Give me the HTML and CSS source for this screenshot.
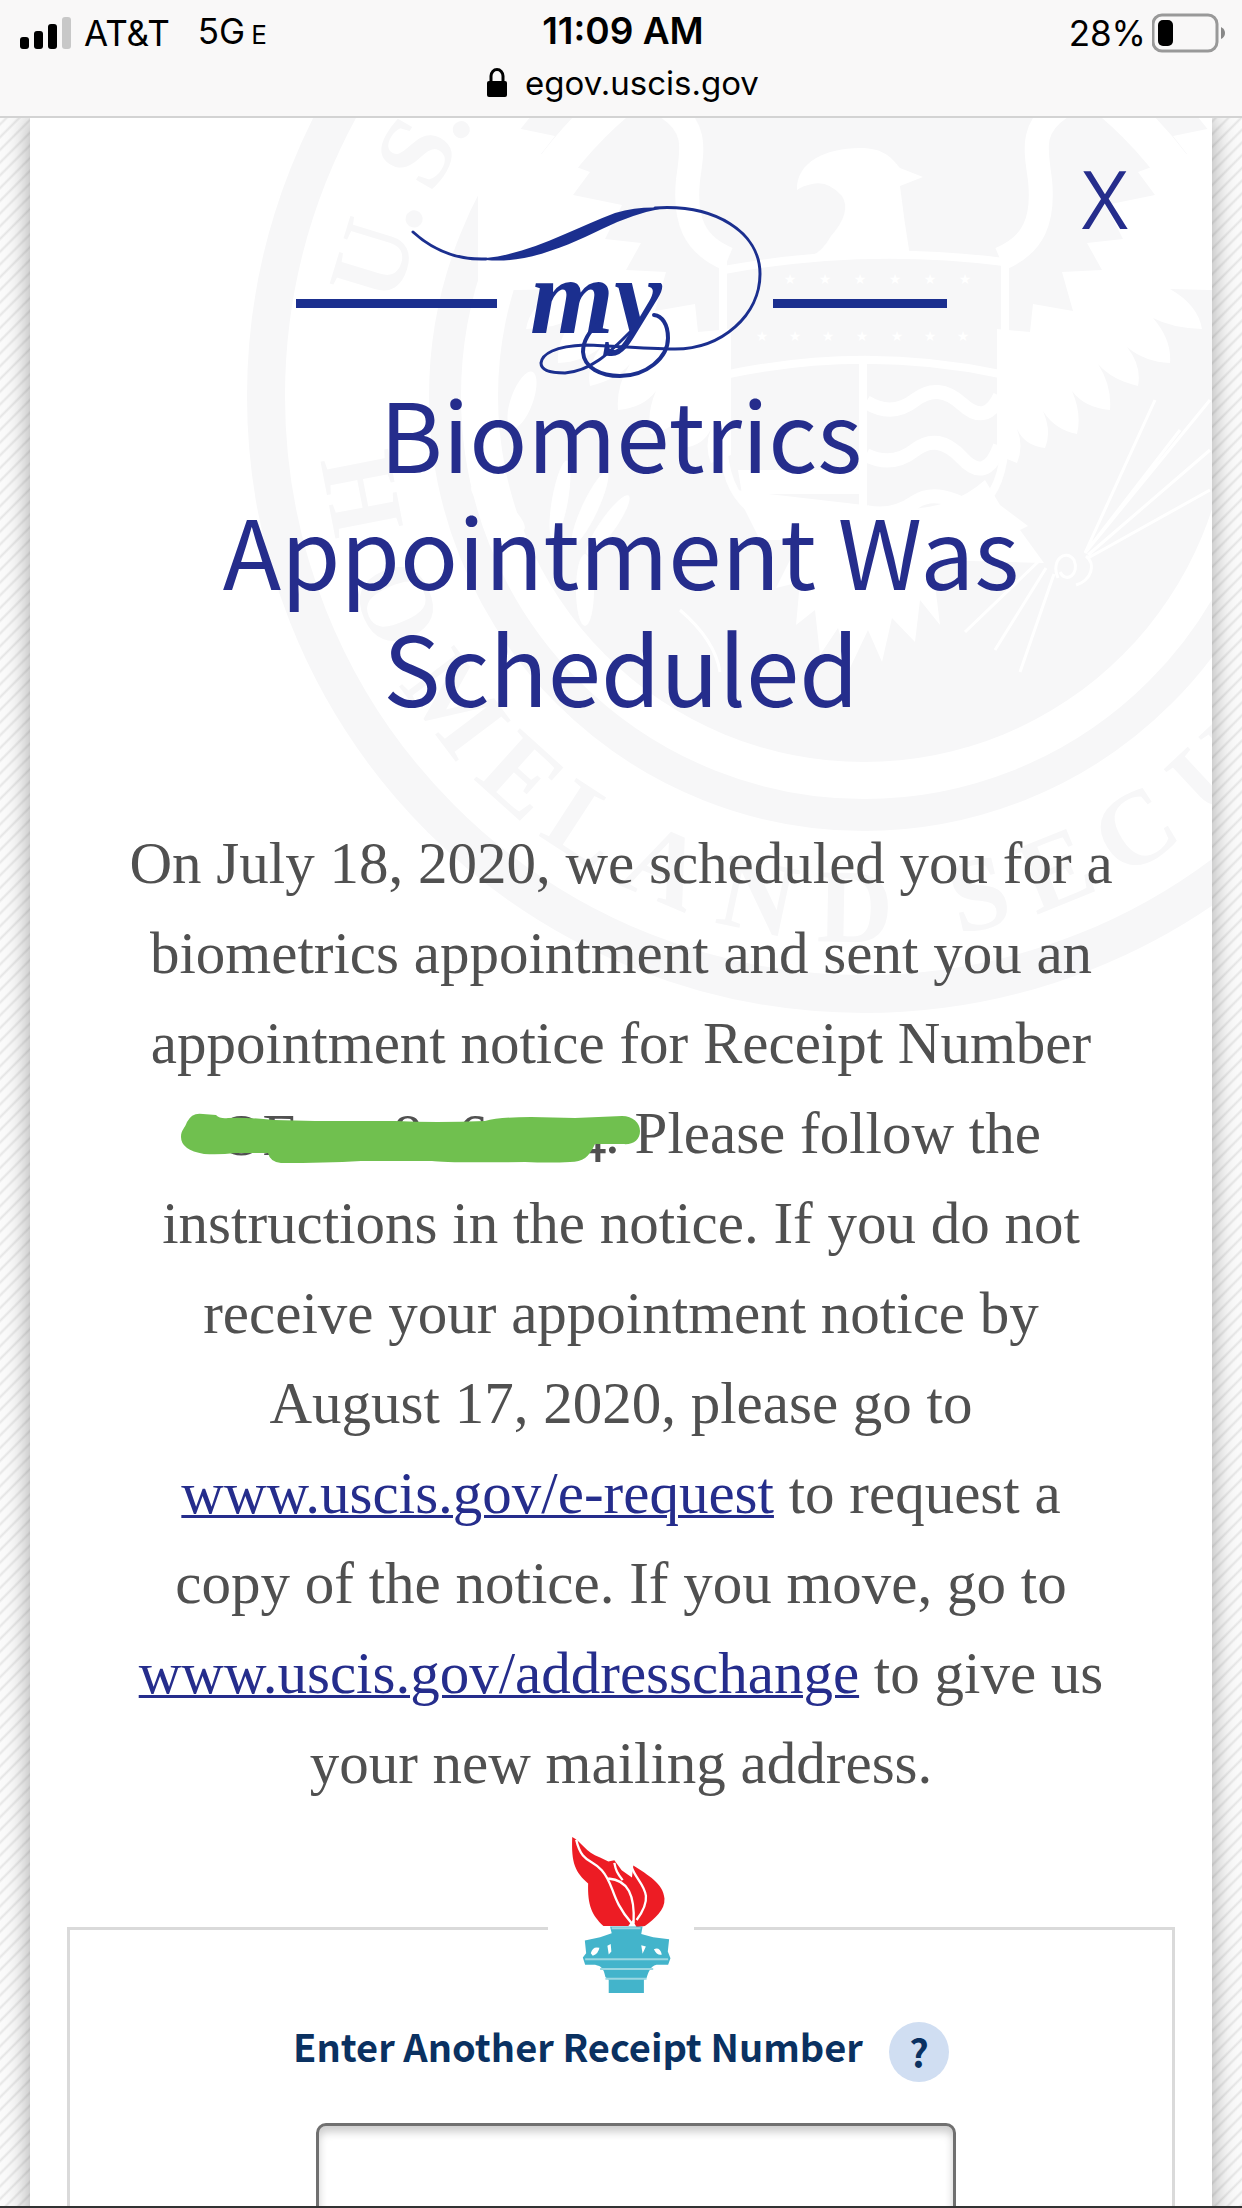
FILE: index.html
```html
<!DOCTYPE html>
<html lang="en">
<head>
  <meta charset="UTF-8">
  <meta name="viewport" content="width=device-width, initial-scale=1.0">
  <title>Case Status</title>
  <link rel="stylesheet" href="styles.css">
</head>
<body>

  <!-- Status bar and address -->
  <header class="browser-bar">
    <div class="status-row">
      <div class="carrier">
        <svg class="signal" viewBox="0 0 52 40" aria-hidden="true">
          <rect x="0" y="24" width="9" height="12" rx="3"/>
          <rect x="14" y="18" width="9" height="18" rx="3"/>
          <rect x="28" y="11" width="9" height="25" rx="3"/>
          <rect x="42" y="4" width="9" height="32" rx="3" fill="#c8c8c8"/>
        </svg>
        <span>AT&amp;T</span>
        <span class="network">5G<small>E</small></span>
      </div>
      <div class="time">11:09 AM</div>
      <div class="battery">
        <span>28%</span>
        <svg class="battery-icon" viewBox="0 0 74 40" aria-hidden="true">
          <rect x="1" y="2" width="64" height="36" rx="9" fill="none" stroke="#999" stroke-width="3"/>
          <rect x="6" y="7" width="15" height="26" rx="5"/>
          <path d="M69 14 Q73 16 73 20 Q73 24 69 26 Z" fill="#888"/>
        </svg>
      </div>
    </div>
    <div class="address">
      <svg class="lock" viewBox="0 0 20 30" aria-hidden="true">
        <rect x="0" y="13" width="20" height="16" rx="2"/>
        <path d="M4 14 V8 a6 6.500 0 0 1 12 0 V14" fill="none" stroke="#000" stroke-width="3"/>
      </svg>
      <span>egov.uscis.gov</span>
    </div>
  </header>

  <main class="case-card">
    <!-- Agency seal behind the text -->
    <svg class="seal" viewBox="30 118 1182 900" aria-hidden="true">
      <g fill="none" stroke="#f7f7f8">
        <circle cx="864" cy="396" r="598" stroke-width="38"/>
        <circle cx="864" cy="396" r="419" stroke-width="32"/>
      </g>
      <circle cx="864" cy="396" r="366" fill="#f7f7f8"/>
      <g class="seal-text">
        <text x="864" y="-79" transform="rotate(-73 864 396)">U.</text>
        <text x="864" y="-79" transform="rotate(-60 864 396)">S.</text>
        <text x="864" y="942" transform="rotate(79 864 396)">H</text>
        <text x="864" y="942" transform="rotate(66 864 396)">O</text>
        <text x="864" y="942" transform="rotate(53 864 396)">M</text>
        <text x="864" y="942" transform="rotate(42 864 396)">E</text>
        <text x="864" y="942" transform="rotate(33 864 396)">L</text>
        <text x="864" y="942" transform="rotate(23 864 396)">A</text>
        <text x="864" y="942" transform="rotate(12 864 396)">N</text>
        <text x="864" y="942" transform="rotate(1 864 396)">D</text>
        <text x="864" y="942" transform="rotate(-13 864 396)">S</text>
        <text x="864" y="942" transform="rotate(-22 864 396)">E</text>
        <text x="864" y="942" transform="rotate(-32 864 396)">C</text>
        <text x="864" y="942" transform="rotate(-43 864 396)">U</text>
      </g>
      <!-- Eagle wings, one half mirrored -->
      <defs>
        <g id="wing">
          <path fill="#fff" d="M1210 290 L1170 289 Q1198 305 1202 329 Q1172 328 1153 318 Q1172 340 1170 363 Q1145 362 1127 347 Q1142 366 1138 386 Q1112 380 1098 364 Q1112 386 1110 410 Q1085 408 1072 391 Q1082 414 1077 434 Q1055 430 1043 411 Q1052 432 1045 448 Q1025 446 1017 429 Q1024 446 1017 463 L997 455 V329 L1030 332 L1033 304 L1073 311 L1062 272 L1102 270 L1087 243 L1123 239 L1106 205 L1155 195 L1138 172 L1187 154 L1173 136 L1250 120 V290 Z"/>
          <path fill="none" stroke="#fff" stroke-width="24" d="M1060 108 C1030 128 1036 150 1040 180 C1044 220 1034 245 1000 259"/>
          <path fill="none" stroke="#fff" stroke-width="8" d="M1005 258 V440 C1004 480 990 500 976 510"/>
        </g>
      </defs>
      <use href="#wing"/>
      <use href="#wing" transform="translate(1728 0) scale(-1 1)"/>
      <!-- Head, tail and olive branch -->
      <g fill="#fff">
        <path d="M797 190 C796 162 826 148 860 148 C884 148 892 158 900 168 L923 177 L900 186 Q904 220 910 256 H811 Q822 252 831 236 Q852 212 842 196 Q828 180 812 184 Q802 186 797 190 Z"/>
        <path d="M738 470 H862 V494 H742 Z"/>
        <path d="M735 490 L760 540 H800 L776 588 L800 582 L796 625 L815 610 L820 655 L838 628 L850 668 L868 630 L882 662 L892 618 L915 642 L920 600 L940 625 L932 560 L1044 563 L1020 530 L1028 526 L1000 505 L985 480 Q940 520 864 505 Z"/>
        <ellipse cx="522" cy="400" rx="11" ry="30" transform="rotate(20 522 400)"/>
        <ellipse cx="498" cy="508" rx="10" ry="34" transform="rotate(-50 498 508)"/>
        <ellipse cx="560" cy="500" rx="8" ry="40" transform="rotate(10 560 500)"/>
        <ellipse cx="590" cy="508" rx="8" ry="40" transform="rotate(25 590 508)"/>
        <ellipse cx="608" cy="525" rx="8" ry="36" transform="rotate(35 608 525)"/>
        <ellipse cx="585" cy="590" rx="9" ry="36"/>
      </g>
      <!-- Shield bands, stars, waves -->
      <g fill="none" stroke="#fff" stroke-width="8">
        <path d="M724 270 Q864 244 1004 262 M724 375 Q864 345 1000 374 M863 360 V510"/>
        <path stroke-width="14" d="M866 402 Q892 418 915 400 T962 404 T1000 396 M866 455 Q892 468 915 450 T962 458 T1000 446 M866 512 Q892 518 915 502 T980 514"/>
        <path stroke-width="3" d="M1085 553 L1155 400 M1085 553 L1180 430 M1085 553 L1210 400 M1088 555 L1210 450 M1088 558 L1210 490 M1040 560 L965 632 M1046 568 L995 650 M1054 574 L1020 672 M680 610 Q715 640 720 672"/>
        <path stroke-width="3" d="M1058 578 C1050 560 1066 548 1074 560 C1080 574 1066 584 1060 572 M1076 585 C1092 580 1096 564 1086 556"/>
      </g>
      <g class="seal-stars">
        <text x="790 825 860 895 930 965" y="284">★★★★★★</text>
        <text x="762 795 828 862 897 930 963" y="341">★★★★★★★</text>
      </g>
    </svg>

    <button type="button" class="close" aria-label="Close">X</button>

    <svg class="my-logo" viewBox="296 205 651 168" role="img" aria-label="my">
      <g fill="#1b2f8f">
        <rect x="296" y="299" width="201" height="9"/>
        <rect x="773" y="299" width="174" height="9"/>
        <path d="M486 258 C530 254 575 228 615 213 Q640 206 664 208 Q632 214 602 229 C565 247 525 264 486 260 Z"/>
        <text class="my-text" x="530" y="333">my</text>
      </g>
      <g fill="none" stroke="#1b2f8f" stroke-width="3" stroke-linecap="round">
        <path d="M413 232 C435 252 460 260 486 259 M655 208 C715 204 760 232 760 274 C760 315 722 349 675 349 C640 349 605 345 585 345 C555 346 542 354 541 363 C541 371 552 373 565 373 C592 371 610 352 630 332"/>
        <path stroke-width="4" d="M600 322 C588 332 583 342 583 352 C584 368 601 376 620 376 C646 376 668 358 668 338 C668 324 662 316 654 315"/>
      </g>
    </svg>

    <h1>Biometrics Appointment Was Scheduled</h1>

    <p class="case-text">
      On July 18, 2020, we scheduled you for a biometrics appointment and sent you an appointment notice for Receipt Number
      <svg class="redacted" viewBox="206 1101 404 50" role="img" aria-label="redacted">
        <g fill="#505050">
          <text x="225" y="1153">OE</text>
          <text x="398" y="1153">8</text>
          <text x="463" y="1153">6</text>
          <text x="582" y="1160">4</text>
        </g>
        <path fill="#70c04f" d="M186 1135 C186 1128 190 1126 192 1120 Q197 1110 208 1112 L221 1113 Q225 1117 233 1116 Q250 1115 279 1118 L320 1119 L400 1119 Q440 1121 490 1119 Q504 1115 536 1115 L580 1116 L627 1114 C638 1114 645 1121 645 1129 C645 1138 638 1143 628 1142 L600 1142 C594 1155 588 1160 575 1160 Q555 1161 530 1160 Q450 1161 437 1159 L366 1159 Q330 1161 286 1161 Q275 1160 273 1151 L240 1151 Q225 1153 209 1152 Q186 1148 186 1135 Z"/>
      </svg>. Please follow the instructions in the notice. If you do not receive your appointment notice by August 17, 2020, please go to <a href="#">www.uscis.gov/e-request</a> to request a copy of the notice. If you move, go to <a href="#">www.uscis.gov/addresschange</a> to give us your new mailing address.
    </p>

    <form>
      <fieldset class="receipt-box">
        <legend>
          <svg class="torch" viewBox="150 50 306 470" role="img" aria-label="Torch">
            <path fill="#ed1c24" d="M156 50 C185 65 195 95 240 112 L265 124 L283 120 L305 150 L336 172 L340 136 C385 165 430 190 434 235 C436 270 405 295 375 318 L350 322 L338 300 L325 318 H250 C215 285 202 255 204 190 C165 155 153 130 156 50 Z"/>
            <path fill="none" stroke="#fff" stroke-width="7" d="M168 58 C185 130 215 115 245 150 C285 195 270 235 335 310 M265 175 C325 180 345 225 341 310 M335 140 C350 190 415 215 350 300 M283 128 C287 150 292 160 308 180"/>
            <path fill="#43b4cb" d="M270 320 H368 L364 342 L400 352 L448 358 L444 395 L452 415 L445 435 H410 C390 440 385 460 380 475 L372 480 V520 H266 V480 L256 472 C250 445 245 440 225 435 H195 L188 413 L198 400 L194 362 L240 352 L275 340 Z"/>
            <path fill="none" stroke="#9bd7e2" stroke-width="6" d="M195 418 H445 M240 448 H400 M256 477 H380 M275 325 H362"/>
            <path fill="#fff" d="M212 400 Q218 378 238 384 Q235 402 218 408 Z M262 378 L272 372 L274 395 L266 404 Z M364 376 L378 380 L368 402 Z M402 388 Q420 380 426 404 Q412 408 402 388 Z"/>
          </svg>
        </legend>
        <div class="label-row">
          <label for="receipt">Enter Another Receipt Number</label>
          <button type="button" class="help" aria-label="Help">?</button>
        </div>
        <input type="text" id="receipt" name="receipt">
      </fieldset>
    </form>
  </main>

</body>
</html>
```
FILE: styles.css
```css
* {
  box-sizing: border-box;
}

body {
  margin: 0;
  height: 100vh;
  overflow: hidden;
  display: flex;
  flex-direction: column;
  border-bottom: 2px solid #333;
  background: repeating-linear-gradient(135deg, #fbfbfb 0, #fbfbfb 5px, #e6e6e6 7px, #fbfbfb 9px);
  color: #505050;
}

/* Browser bar */
.browser-bar {
  position: relative;
  z-index: 1;
  flex: none;
  height: 118px;
  padding: 7px 16px 0 20px;
  border-bottom: 2px solid #d3d3d3;
  background-color: #f9f8f8;
  color: #000;
  font-family: Inter, sans-serif;
  font-size: 35px;
  line-height: 48px;
}

.status-row {
  display: grid;
  grid-template-columns: 1fr auto 1fr;
}

.carrier,
.battery,
.address {
  display: flex;
  align-items: center;
}

.signal {
  width: 52px;
  height: 40px;
  margin-right: 12px;
}

.network {
  margin-left: 28px;
}

.network small {
  margin-left: 6px;
  font-size: 26px;
}

.time {
  font-size: 37px;
  font-weight: 600;
}

.battery {
  justify-content: flex-end;
  gap: 6px;
}

.battery-icon {
  width: 74px;
  height: 40px;
}

.address {
  justify-content: center;
  gap: 18px;
  font-size: 33px;
}

.lock {
  width: 20px;
  height: 30px;
}

/* Case card */
.case-card {
  position: relative;
  flex: 1 0 auto;
  margin: 0 30px;
  padding: 87px 37px 0;
  background-color: #fff;
  box-shadow: 0 0 24px rgba(0, 0, 0, 0.35);
  text-align: center;
}

.seal {
  position: absolute;
  top: 0;
  left: 0;
  width: 100%;
}

.seal-text {
  fill: #f7f7f8;
  font-family: "Liberation Serif", serif;
  font-size: 105px;
  font-weight: bold;
  text-anchor: middle;
}

.seal-stars {
  fill: #fff;
  font-family: "DejaVu Sans", sans-serif;
  font-size: 14px;
  text-anchor: middle;
}

.close {
  position: absolute;
  top: 38px;
  right: 80px;
  padding: 0 4px;
  border: none;
  background: none;
  color: #252d8c;
  font-family: "Open Sans", sans-serif;
  font-size: 80px;
  line-height: 84px;
  cursor: pointer;
}

.my-logo {
  position: relative;
  display: block;
  width: 651px;
  height: 168px;
  margin: 0 auto;
  overflow: visible;
}

.my-text {
  font-family: "Liberation Serif", serif;
  font-size: 108px;
  font-style: italic;
  font-weight: bold;
}

h1 {
  position: relative;
  max-width: 1000px;
  margin: 0 auto 94px;
  color: #252d8c;
  font-family: "Noto Sans CJK SC", sans-serif;
  font-size: 96px;
  font-weight: normal;
  line-height: 117px;
}

.case-text {
  position: relative;
  max-width: 990px;
  margin: 0 auto 29px;
  font-family: Georgia, "Liberation Serif", serif;
  font-size: 59px;
  line-height: 90px;
}

.case-text a {
  color: #252d8c;
  text-decoration-thickness: 3px;
}

.redacted {
  width: 404px;
  height: 50px;
  overflow: visible;
}

/* Receipt form */
.receipt-box {
  position: relative;
  margin: 0;
  padding: 0;
  border: 3px solid #dadada;
}

.receipt-box legend {
  height: 182px;
  margin: 0 auto;
  padding: 0 22px;
}

.torch {
  display: block;
  width: 102px;
  height: 156px;
}

.label-row {
  display: flex;
  justify-content: center;
  align-items: center;
  gap: 26px;
  margin: 3px 0 41px;
  color: #0a3161;
  font-family: "Noto Sans CJK SC", sans-serif;
  font-size: 38px;
  font-weight: bold;
  line-height: 48px;
}

.label-row label {
  padding-bottom: 12px;
}

.help {
  width: 60px;
  height: 60px;
  padding: 0;
  border: none;
  border-radius: 50%;
  background-color: #d0def2;
  color: inherit;
  font: inherit;
  cursor: pointer;
}

.receipt-box input {
  width: 58%;
  height: 120px;
  margin-left: 30px;
  border: 3px solid #707070;
  border-radius: 10px;
  box-shadow: inset 0 6px 8px rgba(0, 0, 0, 0.2);
  font-size: 38px;
}
```
